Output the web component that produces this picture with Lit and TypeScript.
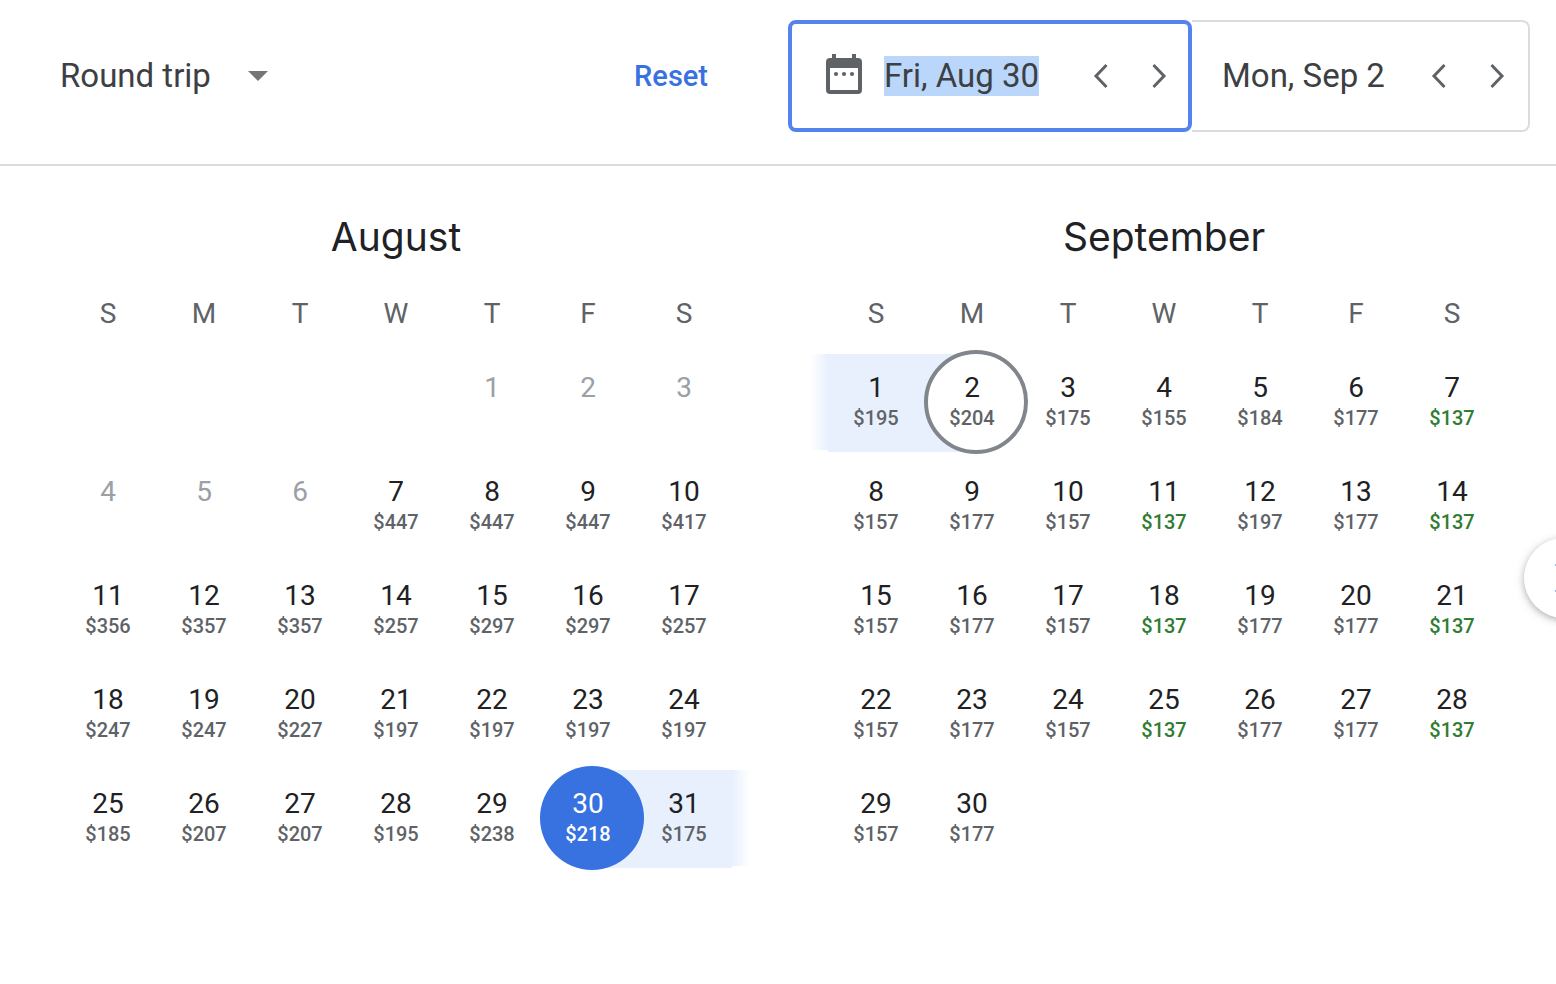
import { LitElement, html, css, nothing } from "lit";
import { customElement, property } from "lit/decorators.js";
import { classMap } from "lit/directives/class-map.js";

interface Month {
  name: string;
  offset: number;
  days: number;
  firstPriced: number;
  prices: number[];
}

const WEEKDAYS: [string, string][] = [
  ["S", "Sunday"],
  ["M", "Monday"],
  ["T", "Tuesday"],
  ["W", "Wednesday"],
  ["T", "Thursday"],
  ["F", "Friday"],
  ["S", "Saturday"],
];

const LOW_FARE = 137;

const AUGUST: Month = {
  name: "August",
  offset: 4,
  days: 31,
  firstPriced: 7,
  prices: [
    447, 447, 447, 417, 356, 357, 357, 257, 297, 297, 257, 247, 247, 227, 197,
    197, 197, 197, 185, 207, 207, 195, 238, 218, 175,
  ],
};

const SEPTEMBER: Month = {
  name: "September",
  offset: 0,
  days: 30,
  firstPriced: 1,
  prices: [
    195, 204, 175, 155, 184, 177, 137, 157, 177, 157, 137, 197, 177, 137, 157,
    177, 157, 137, 177, 177, 137, 157, 177, 157, 137, 177, 177, 137, 157, 177,
  ],
};

@customElement("date-field")
export class DateField extends LitElement {
  @property() label = "";
  @property() value = "";
  @property({ type: Boolean, reflect: true }) active = false;

  static styles = css`
    :host {
      display: flex;
      align-items: center;
      box-sizing: border-box;
      height: 112px;
      padding: 0 11px 0 30px;
      border: 2px solid #dadce0;
      border-left: 0;
      border-radius: 0 8px 8px 0;
      background: #fff;
    }
    :host([active]) {
      padding: 0 9px 0 34px;
      border: 4px solid #5383ec;
      border-radius: 8px;
    }
    .calendar {
      flex: none;
      width: 36px;
      height: 40px;
      margin-right: 22px;
      margin-bottom: 4px;
    }
    .text {
      field-sizing: content;
      height: 40px;
      padding: 0;
      border: 0;
      outline: 0;
      background: transparent;
      color: #3c4043;
      font: 400 33px/40px Roboto, sans-serif;
    }
    :host([active]) .text {
      background: #bad6fb;
    }
    .steps {
      display: flex;
      gap: 18px;
      margin-left: auto;
    }
    .step {
      display: block;
      width: 40px;
      height: 40px;
      padding: 0;
      border: 0;
      background: none;
      cursor: pointer;
    }
    .step svg {
      display: block;
      fill: none;
      stroke: #5f6368;
      stroke-width: 3;
    }
  `;

  render() {
    return html`
      ${this.active
        ? html`<svg class="calendar" viewBox="0 0 36 40" aria-hidden="true">
            <path
              fill="#5f6368"
              fill-rule="evenodd"
              d="M6 0h4v4h16V0h4v4h2a4 4 0 0 1 4 4v28a4 4 0 0 1-4 4H4a4 4 0 0 1-4-4V8a4 4 0 0 1 4-4h2zM4 14v22h28V14z"
            />
            <g fill="#5f6368">
              <circle cx="10" cy="20" r="2.1" />
              <circle cx="18" cy="20" r="2.1" />
              <circle cx="26" cy="20" r="2.1" />
            </g>
          </svg>`
        : nothing}
      <input class="text" type="text" aria-label=${this.label} .value=${this.value} />
      <div class="steps">
        <button class="step" aria-label="Previous day">
          <svg width="40" height="40" viewBox="0 0 40 40"><path d="M25.500 9 15 20l10.500 11" /></svg>
        </button>
        <button class="step" aria-label="Next day">
          <svg width="40" height="40" viewBox="0 0 40 40"><path d="M14.500 9 25 20 14.500 31" /></svg>
        </button>
      </div>
    `;
  }
}

@customElement("month-grid")
export class MonthGrid extends LitElement {
  @property({ attribute: false }) month!: Month;
  @property({ type: Number }) start = 0;
  @property({ type: Number }) end = 0;

  static styles = css`
    :host {
      display: block;
      flex: 1 1 0;
      min-width: 0;
    }
    .title {
      margin: 0 0 16px;
      color: #202124;
      font: 400 39px/46px Inter, sans-serif;
      text-align: center;
    }
    .grid {
      width: 100%;
      table-layout: fixed;
      border-collapse: collapse;
    }
    .weekday {
      height: 72px;
      padding: 2px 0 0;
      box-sizing: border-box;
      color: #5f6368;
      font: 400 28px/32px Roboto, sans-serif;
    }
    .weekdays {
      height: 74px;
    }
    .cell {
      height: 104px;
      padding: 0;
      vertical-align: top;
    }
    .day {
      position: relative;
      isolation: isolate;
      display: block;
      width: 100%;
      height: 104px;
      padding: 0 0 4px;
      border: 0;
      background: none;
      color: #202124;
      font-family: Roboto, sans-serif;
      text-align: center;
      cursor: pointer;
    }
    .number,
    .price {
      display: block;
    }
    .number {
      font-size: 28px;
      line-height: 32px;
      padding-top: 4px;
    }
    .price {
      color: #5f6368;
      font-size: 20px;
      font-weight: 500;
      line-height: 28px;
    }
    .low .price {
      color: #2f7d32;
    }
    .day:disabled {
      padding-bottom: 32px;
      color: #9aa0a6;
      cursor: default;
    }
    .picked {
      z-index: 1;
    }
    .band::before {
      content: "";
      position: absolute;
      z-index: -2;
      inset: 4px 0 2px;
      background: #e8f0fe;
    }
    .start::before {
      left: 50%;
    }
    .end::before {
      right: 50%;
    }
    .fade-right::after,
    .fade-left::after {
      content: "";
      position: absolute;
      z-index: -1;
      top: 4px;
      width: 18px;
      height: 96px;
    }
    .fade-right::after {
      left: 100%;
      background: linear-gradient(to right, #e8f0fe, #fff);
    }
    .fade-left::after {
      right: 100%;
      background: linear-gradient(to left, #e8f0fe, #fff);
    }
    .picked::after {
      content: "";
      position: absolute;
      z-index: -1;
      top: 0;
      left: 0;
      box-sizing: border-box;
      width: 104px;
      height: 104px;
      border-radius: 50%;
    }
    .start::after {
      background: #3871e0;
    }
    .end::after {
      border: 4px solid #80868b;
      background: #fff;
    }
    .start,
    .start .price {
      color: #fff;
    }
  `;

  private renderDay(day: number) {
    const { days, firstPriced, prices } = this.month;
    if (day < 1 || day > days) return nothing;
    const price = prices[day - firstPriced];
    const isStart = day === this.start;
    const isEnd = day === this.end;
    const inBand =
      (this.start > 0 && day >= this.start) || (this.end > 0 && day <= this.end);
    const classes = {
      day: true,
      low: price === LOW_FARE,
      picked: isStart || isEnd,
      start: isStart,
      end: isEnd,
      band: inBand,
      "fade-right": this.start > 0 && day === days,
      "fade-left": this.end > 0 && day === 1,
    };
    return html`<button class=${classMap(classes)} ?disabled=${price === undefined}>
      <span class="number">${day}</span>
      ${price === undefined ? nothing : html`<span class="price">$${price}</span>`}
    </button>`;
  }

  render() {
    const { name, offset, days } = this.month;
    const weeks = Array.from({ length: Math.ceil((offset + days) / 7) }, (_, w) => w);
    return html`
      <h2 class="title" id="title">${name}</h2>
      <table class="grid" aria-labelledby="title">
        <thead>
          <tr class="weekdays">
            ${WEEKDAYS.map(
              ([short, long]) => html`<th class="weekday" scope="col" abbr=${long}>${short}</th>`
            )}
          </tr>
        </thead>
        <tbody>
          ${weeks.map(
            (w) => html`<tr>
              ${WEEKDAYS.map(
                (_, d) => html`<td class="cell">${this.renderDay(w * 7 + d + 1 - offset)}</td>`
              )}
            </tr>`
          )}
        </tbody>
      </table>
    `;
  }
}

@customElement("app-root")
export class AppRoot extends LitElement {
  static styles = css`
    :host {
      display: block;
      position: relative;
      min-height: 100vh;
      overflow: hidden;
      background: #fff;
      font-family: Roboto, sans-serif;
    }
    .bar {
      display: flex;
      align-items: center;
      padding: 20px 26px 32px 60px;
      border-bottom: 2px solid #dadce0;
    }
    .trip {
      display: grid;
      align-items: center;
    }
    .trip-select,
    .caret {
      grid-area: 1 / 1;
    }
    .trip-select {
      appearance: none;
      height: 48px;
      padding: 0 57px 0 0;
      border: 0;
      background: none;
      color: #3c4043;
      font: 400 33px/48px Roboto, sans-serif;
    }
    .caret {
      justify-self: end;
      width: 20px;
      height: 10px;
      pointer-events: none;
    }
    .reset {
      margin-left: auto;
      padding: 0;
      border: 0;
      background: none;
      color: #3871e0;
      font: 500 29px/40px Roboto, sans-serif;
      cursor: pointer;
    }
    .dates {
      display: flex;
      margin-left: 80px;
    }
    .depart {
      width: 404px;
    }
    .return {
      width: 338px;
    }
    .months {
      display: flex;
      gap: 96px;
      padding: 48px 56px 0 60px;
    }
    .next {
      position: absolute;
      top: 538px;
      right: -48px;
      width: 80px;
      height: 80px;
      padding: 0;
      border: 0;
      border-radius: 50%;
      background: #fff;
      box-shadow: 0 2px 6px rgba(60, 64, 67, 0.3), 0 2px 12px rgba(60, 64, 67, 0.15);
      cursor: pointer;
    }
    .next svg {
      display: block;
      fill: none;
      stroke: #3871e0;
      stroke-width: 3;
    }
  `;

  render() {
    return html`
      <header class="bar">
        <div class="trip">
          <select class="trip-select" aria-label="Trip type">
            <option>Round trip</option>
          </select>
          <svg class="caret" viewBox="0 0 20 10" aria-hidden="true">
            <path fill="#757575" d="M0 0h20L10 10z" />
          </svg>
        </div>
        <button class="reset">Reset</button>
        <div class="dates">
          <date-field class="depart" label="Departure date" value="Fri, Aug 30" active></date-field>
          <date-field class="return" label="Return date" value="Mon, Sep 2"></date-field>
        </div>
      </header>
      <main class="months">
        <month-grid .month=${AUGUST} .start=${30}></month-grid>
        <month-grid .month=${SEPTEMBER} .end=${2}></month-grid>
      </main>
      <button class="next" aria-label="Next month">
        <svg width="80" height="80" viewBox="0 0 80 80"><path d="M32 26l14 14-14 14" /></svg>
      </button>
    `;
  }
}
